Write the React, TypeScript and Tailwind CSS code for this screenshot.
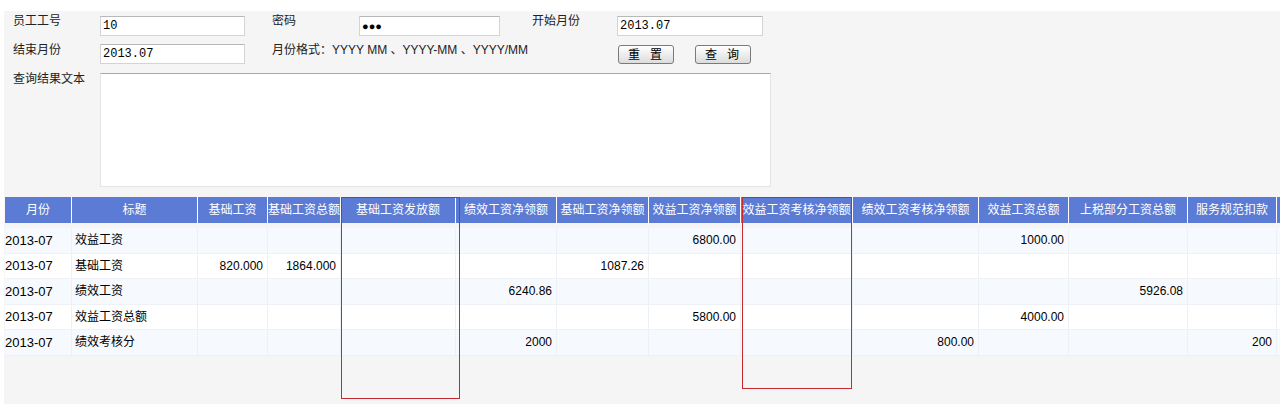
const cols = [
  { title: '月份', w: 67 },
  { title: '标题', w: 126 },
  { title: '基础工资', w: 70 },
  { title: '基础工资总额', w: 73 },
  { title: '基础工资发放额', w: 115 },
  { title: '绩效工资净领额', w: 101 },
  { title: '基础工资净领额', w: 92 },
  { title: '效益工资净领额', w: 92 },
  { title: '效益工资考核净领额', w: 112 },
  { title: '绩效工资考核净领额', w: 126 },
  { title: '效益工资总额', w: 90 },
  { title: '上税部分工资总额', w: 119 },
  { title: '服务规范扣款', w: 89 },
  { title: '', w: 40 },
];

// values keyed by column index
const rows: { title: string; vals: Record<number, string> }[] = [
  { title: '效益工资', vals: { 7: '6800.00', 10: '1000.00' } },
  { title: '基础工资', vals: { 2: '820.000', 3: '1864.000', 6: '1087.26' } },
  { title: '绩效工资', vals: { 5: '6240.86', 11: '5926.08' } },
  { title: '效益工资总额', vals: { 7: '5800.00', 10: '4000.00' } },
  { title: '绩效考核分', vals: { 5: '2000', 9: '800.00', 12: '200' } },
];

const font = "font-['Liberation_Sans','Noto_Sans_CJK_SC',sans-serif]";

function Field({ value, w }: { value: string; w: number }) {
  return (
    <div
      className="h-[20px] bg-white border border-[#d4d4d4] border-t-[#b8b8b8] flex items-center pl-[2px] text-[12px] text-black font-['Liberation_Mono',monospace]"
      style={{ width: w }}
    >
      {value}
    </div>
  );
}

function Btn({ label }: { label: string }) {
  return (
    <button className="w-[56px] h-[19px] rounded-[3px] border border-[#7a7a7a] bg-gradient-to-b from-white to-[#dcdcdc] text-[12px] leading-none text-black tracking-[10px] pl-[8px]">
      {label}
    </button>
  );
}

export default function App() {
  return (
    <div className={`relative w-[1280px] h-[404px] overflow-hidden bg-white pt-[11px] pl-[4px] ${font}`}>
      <div className="h-full bg-[#f5f5f5] pl-[9px] text-[12px] text-[#222]">
        {/* row 1 */}
        <div className="flex items-start pt-[2px] h-[31px]">
          <span className="w-[87px] leading-[16px]">员工工号</span>
          <div className="mt-[3px]"><Field value="10" w={145} /></div>
          <span className="ml-[27px] w-[87px] leading-[16px]">密码</span>
          <div className="mt-[3px]">
            <div className="w-[141px] h-[20px] bg-white border border-[#d4d4d4] border-t-[#b8b8b8] flex items-center pl-[2px] text-[11px] tracking-[0px] text-black">●●●</div>
          </div>
          <span className="ml-[32px] w-[85px] leading-[16px]">开始月份</span>
          <div className="mt-[3px]"><Field value="2013.07" w={146} /></div>
        </div>
        {/* row 2 */}
        <div className="flex items-start h-[29px]">
          <span className="w-[87px] leading-[16px]">结束月份</span>
          <div className="mt-[2px]"><Field value="2013.07" w={145} /></div>
          <span className="ml-[27px] w-[346px] leading-[16px]">月份格式：YYYY MM 、YYYY-MM 、YYYY/MM</span>
          <div className="mt-[3px] flex gap-[21px]">
            <Btn label="重置" />
            <Btn label="查询" />
          </div>
        </div>
        {/* row 3 */}
        <div className="flex items-start">
          <span className="w-[87px] leading-[16px]">查询结果文本</span>
          <div className="mt-[2px] w-[671px] h-[114px] bg-white border border-[#e4e4e4] border-t-[#a8a8a8]" />
        </div>

        {/* result table */}
        <div className="mt-[10px] -ml-[8px] w-[1300px]">
          <div className="flex h-[26px] bg-[#5b7bd5] text-white text-[12px]">
            {cols.map((c, i) => (
              <div
                key={i}
                className="shrink-0 flex items-center justify-center border-r border-white whitespace-nowrap overflow-hidden"
                style={{ width: c.w }}
              >
                {c.title}
              </div>
            ))}
          </div>
          <div className="mt-[5px]">
            {rows.map((r, ri) => (
              <div
                key={ri}
                className={`flex h-[25.5px] text-[12px] text-black border-b border-[#eef2f6] ${
                  ri % 2 === 0 ? 'bg-[#f6fafe]' : 'bg-white'
                }`}
              >
                {cols.map((c, ci) => {
                  let text = r.vals[ci] ?? '';
                  let align = 'justify-end pr-[4px]';
                  if (ci === 0) {
                    text = '2013-07';
                    align = 'justify-start text-[13px]';
                  } else if (ci === 1) {
                    text = r.title;
                    align = 'justify-start pl-[3px]';
                  }
                  return (
                    <div
                      key={ci}
                      className={`shrink-0 flex items-center border-r border-[#edf1f5] whitespace-nowrap ${align}`}
                      style={{ width: c.w }}
                    >
                      {text}
                    </div>
                  );
                })}
              </div>
            ))}
          </div>
        </div>
      </div>

      {/* red annotation boxes */}
      <div className="absolute left-[341px] top-[197px] w-[119px] h-[202px] border border-[#c42a2f]" />
      <div className="absolute left-[742px] top-[197px] w-[110px] h-[192px] border border-[#c42a2f]" />
    </div>
  );
}
